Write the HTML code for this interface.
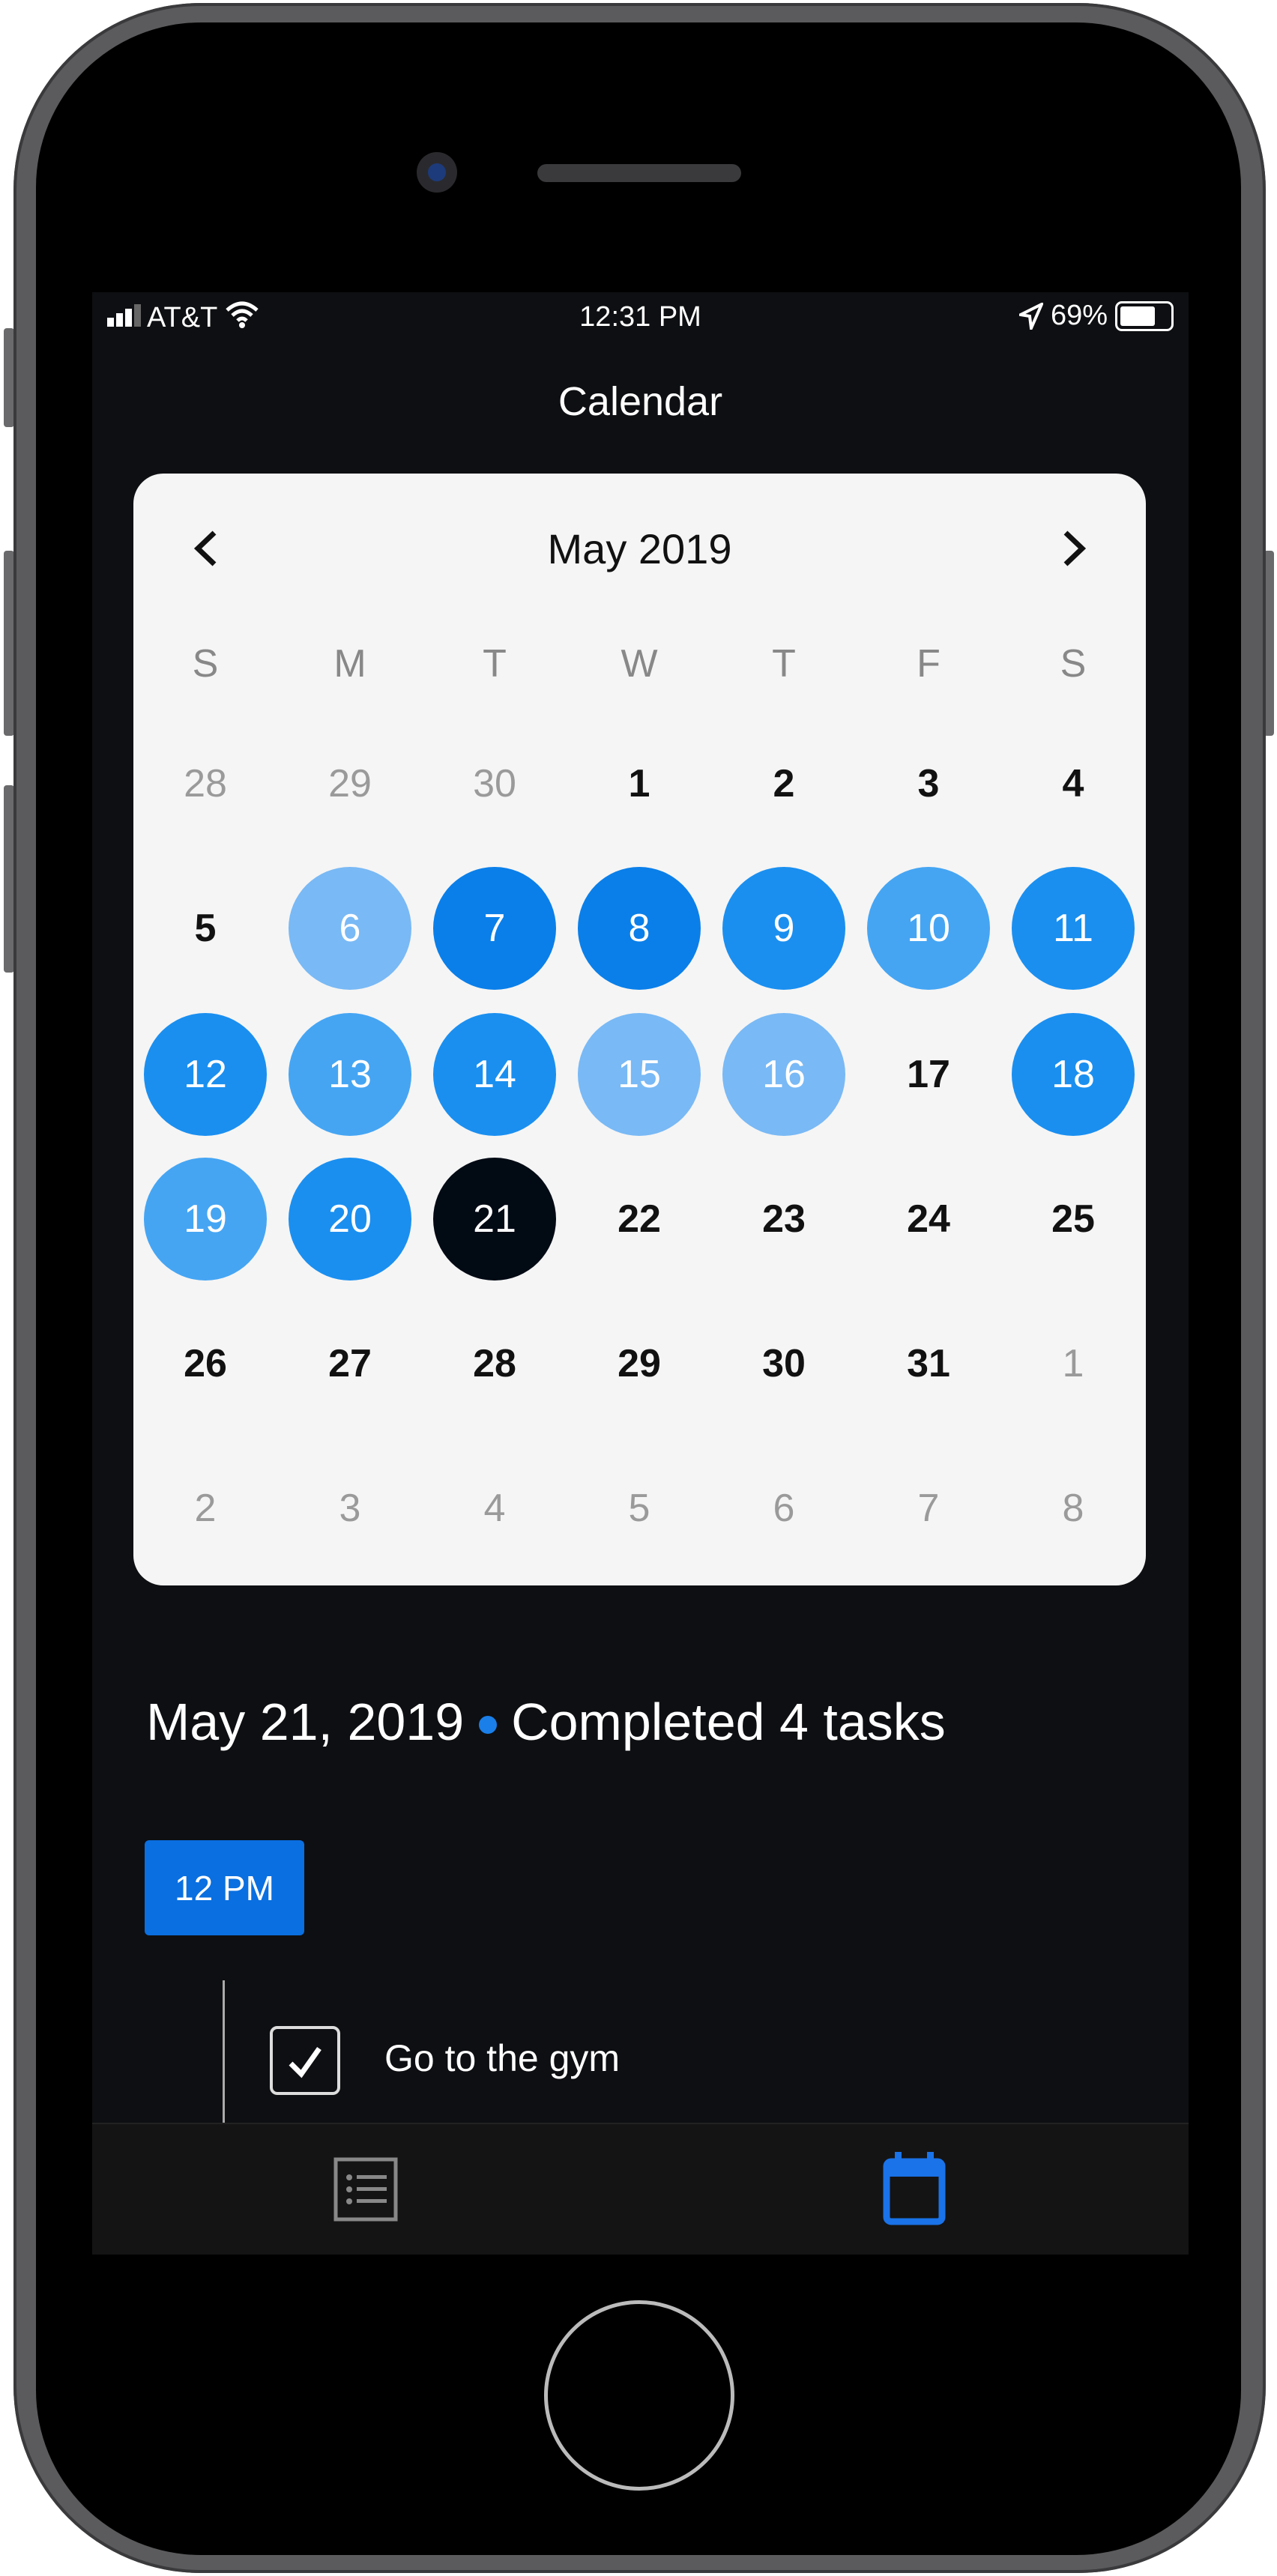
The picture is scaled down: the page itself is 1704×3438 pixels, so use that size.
<!DOCTYPE html>
<html><head><meta charset="utf-8"><style>
*{margin:0;padding:0;box-sizing:border-box}
body{width:1704px;height:3438px;background:#fff;position:relative;overflow:hidden;font-family:"Liberation Sans",sans-serif}
.abs{position:absolute}
.frame{left:18px;top:4px;width:1671px;height:3430px;border-radius:250px;background:#5b5b5d;box-shadow:inset 0 0 0 4px #3a3a3c}
.bezel{left:48px;top:30px;width:1608px;height:3380px;border-radius:220px;background:#000}
.btn{background:#6a6a6c;border-radius:4px}
.screen{left:123px;top:390px;width:1463px;height:2619px;background:#0e0f12;overflow:hidden}
.card{left:55px;top:242px;width:1351px;height:1484px;background:#f5f5f5;border-radius:40px}
.c{position:absolute;width:164px;height:164px;margin-left:-82px;margin-top:-82px;border-radius:50%;display:flex;align-items:center;justify-content:center;font-size:52px}
.g{color:#9a9a9a}.k{color:#111;font-weight:bold}.w{color:#fff}
.wd{color:#888}
</style></head><body>
<div class="abs btn" style="left:5px;top:438px;width:14px;height:132px"></div>
<div class="abs btn" style="left:5px;top:735px;width:14px;height:247px"></div>
<div class="abs btn" style="left:5px;top:1048px;width:14px;height:250px"></div>
<div class="abs btn" style="left:1686px;top:735px;width:14px;height:247px"></div>
<div class="abs frame"></div>
<div class="abs bezel"></div>
<div class="abs" style="left:556px;top:203px;width:54px;height:54px;border-radius:50%;background:#2a2a2e"></div>
<div class="abs" style="left:571px;top:218px;width:24px;height:24px;border-radius:50%;background:#1d3b7a"></div>
<div class="abs" style="left:717px;top:219px;width:272px;height:24px;border-radius:12px;background:#3a3a3c"></div>
<div class="abs" style="left:726px;top:3070px;width:254px;height:254px;border-radius:50%;border:5px solid #bbb;background:#000"></div>

<div class="abs screen">
 <div class="abs" style="left:20px;top:12px;font-size:38px;color:#fff">
  <span style="display:inline-block;width:9px;height:12px;background:#fff;margin-right:3px"></span><span style="display:inline-block;width:9px;height:18px;background:#fff;margin-right:3px"></span><span style="display:inline-block;width:9px;height:24px;background:#fff;margin-right:3px"></span><span style="display:inline-block;width:9px;height:30px;background:#666;margin-right:8px"></span>AT&amp;T
  <svg width="46" height="36" viewBox="0 0 46 36" style="vertical-align:-2px"><path d="M3 12 Q23 -6 43 12 M10 19 Q23 7 36 19 M17 26 Q23 20 29 26" stroke="#fff" stroke-width="5" fill="none"/><circle cx="23" cy="32" r="4" fill="#fff"/></svg>
 </div>
 <div class="abs" style="left:0;width:1463px;top:12px;text-align:center;font-size:38px;color:#fff">12:31 PM</div>
 <div class="abs" style="right:20px;top:10px;font-size:38px;color:#fff;display:flex;align-items:center;gap:10px">
  <svg width="32" height="36" viewBox="0 0 32 36"><path d="M30 2 L2 16 L14 18 L16 34 Z" fill="none" stroke="#fff" stroke-width="4"/></svg>
  <span>69%</span>
  <span style="display:inline-block;width:78px;height:40px;border:3px solid #fff;border-radius:9px;padding:4px;position:relative"><span style="display:block;width:46px;height:100%;background:#fff;border-radius:3px"></span></span>
 </div>
 <div class="abs" style="left:0;width:1463px;top:115px;text-align:center;font-size:54px;color:#fff">Calendar</div>
 <div class="abs card">
  <svg class="abs" style="left:80px;top:75px" width="32" height="50" viewBox="0 0 32 50"><path d="M28 4 L6 25 L28 46" stroke="#111" stroke-width="7" fill="none"/></svg>
  <svg class="abs" style="left:1240px;top:75px" width="32" height="50" viewBox="0 0 32 50"><path d="M4 4 L26 25 L4 46" stroke="#111" stroke-width="7" fill="none"/></svg>
  <div class="abs" style="left:0;width:1351px;top:68px;text-align:center;font-size:56px;color:#111">May 2019</div>
  <div id="grid"></div>
 </div>
 <div class="abs" style="left:72px;top:1868px;font-size:70px;color:#fff;white-space:nowrap">May 21, 2019 <span style="display:inline-block;width:24px;height:24px;border-radius:50%;background:#1a7fe8;vertical-align:8px"></span> Completed 4 tasks</div>
 <div class="abs" style="left:70px;top:2066px;width:213px;height:127px;background:#0a6fe0;border-radius:6px;color:#fff;font-size:46px;display:flex;align-items:center;justify-content:center">12 PM</div>
 <div class="abs" style="left:174px;top:2253px;width:3px;height:190px;background:#aaa"></div>
 <div class="abs" style="left:237px;top:2314px;width:94px;height:92px;border:4px solid #ddd;border-radius:10px"></div>
 <svg class="abs" style="left:255px;top:2332px" width="60" height="60" viewBox="0 0 60 60"><path d="M10 32 L24 46 L48 12" stroke="#fff" stroke-width="7" fill="none"/></svg>
 <div class="abs" style="left:390px;top:2328px;font-size:50px;color:#fff">Go to the gym</div>
 <div class="abs" style="left:0;top:2443px;width:1463px;height:176px;background:#141414;border-top:2px solid #222"></div>
 <svg class="abs" style="left:321px;top:2488px" width="88" height="88" viewBox="0 0 88 88"><rect x="4" y="4" width="80" height="80" fill="none" stroke="#888" stroke-width="5"/><g fill="#888"><circle cx="22" cy="28" r="4"/><circle cx="22" cy="44" r="4"/><circle cx="22" cy="60" r="4"/><rect x="32" y="25" width="40" height="5"/><rect x="32" y="41" width="40" height="5"/><rect x="32" y="57" width="40" height="5"/></g></svg>
 <svg class="abs" style="left:1055px;top:2480px" width="84" height="100" viewBox="0 0 84 100"><rect x="5" y="15" width="74" height="80" rx="6" fill="none" stroke="#1a73e8" stroke-width="9"/><rect x="5" y="15" width="74" height="20" fill="#1a73e8"/><rect x="16" y="2" width="9" height="18" fill="#1a73e8"/><rect x="59" y="2" width="9" height="18" fill="#1a73e8"/></svg>
</div>
<script>
(function(){
 var g=document.getElementById('grid');
 var xs=[96,289,482,675,868,1061,1254];
 var ys=[414,607,802,995,1188,1381];
 var wd=['S','M','T','W','T','F','S'];
 var h='';
 wd.forEach(function(d,i){h+='<div class="c wd" style="left:'+xs[i]+'px;top:254px">'+d+'</div>';});
 var L='#79b9f5',M='#45a5f3',D='#1a8ff0',X='#0a7fe9',K='#020a14';
 var col={6:L,15:L,16:L,10:M,13:M,19:M,9:D,11:D,12:D,14:D,18:D,20:D,7:X,8:X,21:K};
 var days=[28,29,30];for(var d=1;d<=31;d++)days.push(d);days.push(1,2,3,4,5,6,7,8);
 days.forEach(function(d,i){
  var r=Math.floor(i/7),c=i%7;
  var other=(r==0&&d>20)||(r>=4&&d<15);
  var cls=other?'g':(col[d]?'w':'k');
  var bg=(!other&&col[d])?'background:'+col[d]+';':'';
  h+='<div class="c '+cls+'" style="left:'+xs[c]+'px;top:'+ys[r]+'px;'+bg+'">'+d+'</div>';
 });
 g.innerHTML=h;
})();
</script>
</body></html>
